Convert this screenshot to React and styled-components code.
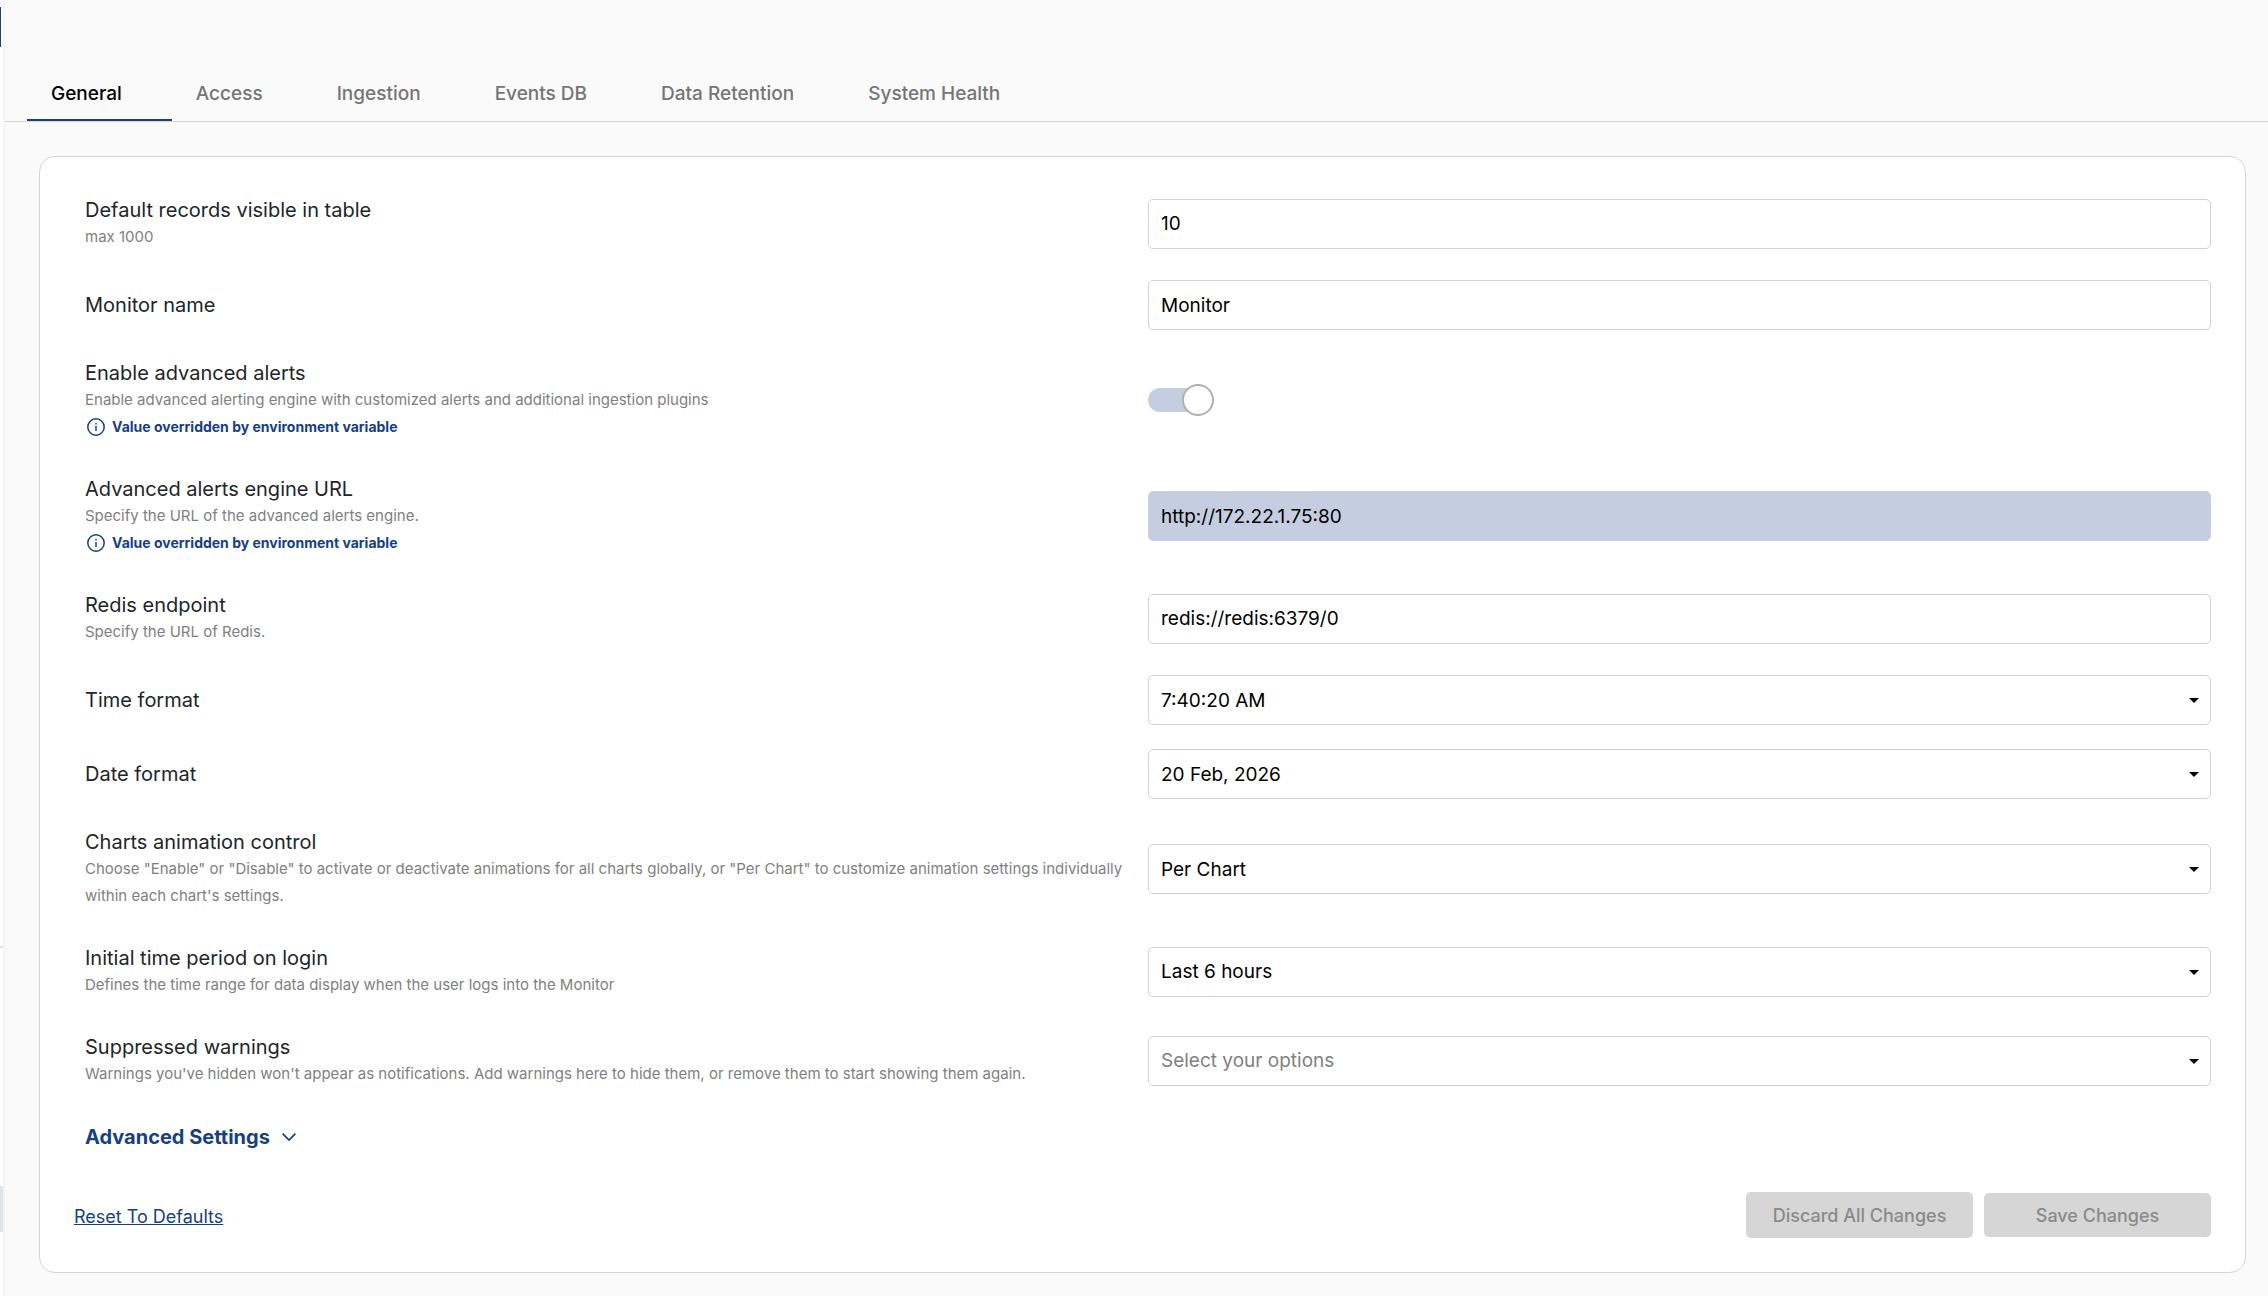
import React, { useState } from 'react';
import styled, { createGlobalStyle } from 'styled-components';

const GlobalStyle = createGlobalStyle`
	*, *::before {
		box-sizing: border-box;
	}
	body {
		margin: 0;
		background: #fafafa;
		color: #212529;
		font-family: Inter, 'Liberation Sans', sans-serif;
		font-size: 20px;
	}
	button, input, select {
		font-family: inherit;
	}
`;

const Layout = styled.div`
	display: flex;
	min-height: 100vh;
`;

// only the edge of the collapsed menu is on screen
const MenuEdge = styled.aside`
	display: flex;
	flex-direction: column;
	flex: none;
	width: 5px;
	padding-top: 7px;
	background: #fff;
	border-right: 2px solid #f5f5f5;
`;

const MenuLogo = styled.div`
	width: 1px;
	height: 40px;
	background: #154083;
`;

const MenuFooter = styled.div`
	height: 350px;
	margin-top: auto;
	padding-top: 238px;
	border-top: 2px solid #dce4ee;
`;

const MenuItem = styled.div`
	height: 46px;
	background: #dce4ec;
`;

const Main = styled.main`
	flex: 1;
	min-width: 0;
	padding-top: 65px;
`;

const Tabs = styled.nav`
	display: flex;
	padding-left: 22px;
	border-bottom: 1px solid #d6d6d6;
`;

const Tab = styled.button`
	padding: 16px 50px 12px 24px;
	border: 0;
	border-bottom: 2px solid ${props => (props.$active ? '#154083' : 'transparent')};
	background: none;
	color: ${props => (props.$active ? '#000' : '#757575')};
	font-size: 19px;
	font-weight: 500;
	line-height: 26px;
	white-space: nowrap;
	cursor: pointer;
`;

const Card = styled.form`
	margin: 34px 22px 23px 34px;
	padding: 34px;
	border: 1px solid #d6d6d6;
	border-radius: 16px;
	background: #fff;
`;

const Rows = styled.div`
	display: flex;
	flex-direction: column;
	gap: 24px;
	padding-left: 11px;
`;

const Row = styled.div`
	display: grid;
	grid-template-columns: 1fr 1fr;
	align-items: center;
`;

const Info = styled.div`
	padding: 7px 24px 6px 0;
`;

const Label = styled.label`
	display: block;
	font-size: 20px;
	line-height: 25px;
`;

const Hint = styled.p`
	margin: 0;
	color: #808080;
	font-size: 15px;
	line-height: 27px;
`;

const Notice = styled.p`
	display: flex;
	align-items: center;
	gap: 7px;
	margin: 0;
	padding-left: 2px;
	color: #154083;
	font-size: 14px;
	font-weight: 700;
	line-height: 27px;
`;

const Input = styled.input`
	width: 100%;
	height: 50px;
	padding: 0 12px;
	border: 1px solid #ccd2dc;
	border-radius: 5px;
	background: #fff;
	color: #000;
	font-size: 19px;

	&:disabled {
		background: #c5cee0;
	}
`;

const SelectBox = styled.div`
	position: relative;

	svg {
		position: absolute;
		top: 23px;
		right: 12px;
		pointer-events: none;
	}
`;

const Select = styled.select`
	display: block;
	width: 100%;
	height: 50px;
	padding: 0 12px;
	border: 1px solid #ccd2dc;
	border-radius: 5px;
	background: #fff;
	color: ${props => (props.$empty ? '#808080' : '#000')};
	font-size: 19px;
	appearance: none;
`;

const Switch = styled.input`
	display: flex;
	align-items: center;
	width: 64px;
	height: 24px;
	margin: 0;
	border-radius: 12px;
	background: #c5cee0;
	appearance: none;

	&::before {
		content: '';
		flex: none;
		width: 32px;
		height: 32px;
		margin-left: ${props => (props.checked ? '34px' : '-2px')};
		border: 2px solid #b0b0b0;
		border-radius: 50%;
		background: #fff;
	}
`;

const AdvancedToggle = styled.button`
	display: flex;
	align-items: center;
	align-self: flex-start;
	gap: 12px;
	padding: 7px 0;
	border: 0;
	background: none;
	color: #154083;
	font-size: 20px;
	font-weight: 700;
	line-height: 26px;
	cursor: pointer;
`;

const Footer = styled.footer`
	display: flex;
	align-items: center;
	gap: 11px;
	margin-top: 35px;
`;

const ResetLink = styled.a`
	margin-right: auto;
	padding-top: 4px;
	color: #154083;
	font-size: 18px;
	line-height: 26px;
`;

const Button = styled.button`
	width: 227px;
	height: ${props => (props.$outlined ? '46px' : '44px')};
	border: 0;
	border-radius: 5px;
	background: #d6d6d6;
	color: #8a8a8a;
	font-size: 18px;
	font-weight: 500;
`;

const InfoIcon = () => (
	<svg width="18" height="18" viewBox="0 0 18 18" fill="none" stroke="currentColor" strokeWidth="1.5">
		<circle cx="9" cy="9" r="8.2" />
		<path d="M9 8v5" />
		<path d="M9 5v1.6" />
	</svg>
);

const CaretIcon = () => (
	<svg width="10" height="5" viewBox="0 0 10 5">
		<path d="M0 0h10L5 5z" fill="#000" />
	</svg>
);

const ChevronIcon = () => (
	<svg width="14" height="10" viewBox="0 0 14 10" fill="none" stroke="currentColor" strokeWidth="1.7">
		<path d="M.6 1.6L7 8l6.4-6.4" />
	</svg>
);

const tabs = ['General', 'Access', 'Ingestion', 'Events DB', 'Data Retention', 'System Health'];

const fields = [
	{ id: 'records', label: 'Default records visible in table', hint: 'max 1000', type: 'text', value: '10' },
	{ id: 'name', label: 'Monitor name', type: 'text', value: 'Monitor' },
	{
		id: 'alerts',
		label: 'Enable advanced alerts',
		hint: 'Enable advanced alerting engine with customized alerts and additional ingestion plugins',
		type: 'switch',
		overridden: true
	},
	{
		id: 'alertsUrl',
		label: 'Advanced alerts engine URL',
		hint: 'Specify the URL of the advanced alerts engine.',
		type: 'text',
		value: 'http://172.22.1.75:80',
		overridden: true
	},
	{ id: 'redis', label: 'Redis endpoint', hint: 'Specify the URL of Redis.', type: 'text', value: 'redis://redis:6379/0' },
	{ id: 'time', label: 'Time format', type: 'select', value: '7:40:20 AM' },
	{ id: 'date', label: 'Date format', type: 'select', value: '20 Feb, 2026' },
	{
		id: 'animation',
		label: 'Charts animation control',
		hint:
			'Choose "Enable" or "Disable" to activate or deactivate animations for all charts globally, or "Per Chart" to customize animation settings individually within each chart\'s settings.',
		type: 'select',
		value: 'Per Chart'
	},
	{
		id: 'period',
		label: 'Initial time period on login',
		hint: 'Defines the time range for data display when the user logs into the Monitor',
		type: 'select',
		value: 'Last 6 hours'
	},
	{
		id: 'warnings',
		label: 'Suppressed warnings',
		hint:
			"Warnings you've hidden won't appear as notifications. Add warnings here to hide them, or remove them to start showing them again.",
		type: 'select',
		value: 'Select your options',
		empty: true
	}
];

const Control = ({ field }) => {
	if (field.type === 'switch') {
		return <Switch id={field.id} type="checkbox" checked readOnly disabled={field.overridden} />;
	}
	if (field.type === 'select') {
		return (
			<SelectBox>
				<Select id={field.id} $empty={field.empty}>
					<option>{field.value}</option>
				</Select>
				<CaretIcon />
			</SelectBox>
		);
	}
	return <Input id={field.id} type="text" defaultValue={field.value} disabled={field.overridden} />;
};

const App = () => {
	const [active, setActive] = useState('General');

	return (
		<Layout>
			<GlobalStyle />
			<MenuEdge>
				<MenuLogo />
				<MenuFooter>
					<MenuItem />
				</MenuFooter>
			</MenuEdge>
			<Main>
				<Tabs>
					{tabs.map(tab =>
						<Tab key={tab} $active={tab === active} onClick={() => setActive(tab)}>
							{tab}
						</Tab>
					)}
				</Tabs>
				<Card onSubmit={e => e.preventDefault()}>
					<Rows>
						{fields.map(field =>
							<Row key={field.id}>
								<Info>
									<Label htmlFor={field.id}>{field.label}</Label>
									{field.hint && <Hint>{field.hint}</Hint>}
									{field.overridden &&
										<Notice>
											<InfoIcon />
											Value overridden by environment variable
										</Notice>}
								</Info>
								<Control field={field} />
							</Row>
						)}
						<AdvancedToggle type="button">
							Advanced Settings
							<ChevronIcon />
						</AdvancedToggle>
					</Rows>
					<Footer>
						<ResetLink href="#reset">Reset To Defaults</ResetLink>
						<Button type="button" $outlined disabled>Discard All Changes</Button>
						<Button type="submit" disabled>Save Changes</Button>
					</Footer>
				</Card>
			</Main>
		</Layout>
	);
};

export default App;
